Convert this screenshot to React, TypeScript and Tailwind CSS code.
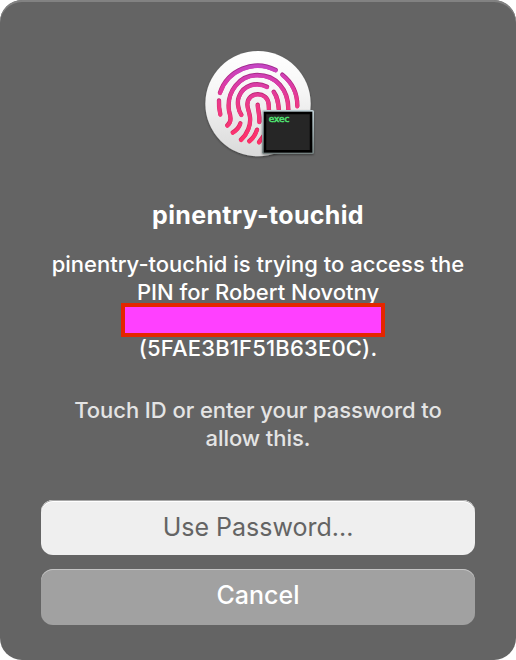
import React from "react";

const ridges = [
  "M72 152A119 119 0 0 1 239 84",
  "M259 98A119 119 0 0 1 304 192",
  "M69 175C68 190 70 204 73 217",
  "M94 250C109 239 103 220 99 206C91 148 131 99 184 99C240 99 278 142 277 204",
  "M136 218C125 202 123 177 129 163C143 128 182 118 213 134",
  "M233 149C245 165 247 182 249 207",
  "M135 293C154 276 165 248 162 225C160 207 155 203 154 187C155 147 215 145 218 187L219 208",
  "M185 188C186 207 192 221 190 239",
  "M110 271C122 265 129 256 133 244",
  "M160 297C172 288 179 276 183 263",
  "M189 300L204 280",
];

function TouchIdIcon() {
  return (
    <svg className="block h-[124px] w-[124px]" viewBox="0 0 372 372" fill="none" role="img" aria-label="Touch ID">
      <defs>
        <linearGradient id="disc" x1="0" y1="27" x2="0" y2="344" gradientUnits="userSpaceOnUse">
          <stop offset="0" stopColor="#ffffff" />
          <stop offset="0.35" stopColor="#f7f7f7" />
          <stop offset="1" stopColor="#d9d9d9" />
        </linearGradient>
        <linearGradient id="ridgeEdge" x1="0" y1="65" x2="0" y2="300" gradientUnits="userSpaceOnUse">
          <stop offset="0" stopColor="#a02a92" />
          <stop offset="0.5" stopColor="#c62568" />
          <stop offset="1" stopColor="#dc2858" />
        </linearGradient>
        <linearGradient id="ridge" x1="0" y1="65" x2="0" y2="300" gradientUnits="userSpaceOnUse">
          <stop offset="0" stopColor="#c446c6" />
          <stop offset="0.25" stopColor="#da3ca8" />
          <stop offset="0.55" stopColor="#ef3a84" />
          <stop offset="1" stopColor="#ff3068" />
        </linearGradient>
        <linearGradient id="frame" x1="0" y1="204" x2="0" y2="337" gradientUnits="userSpaceOnUse">
          <stop offset="0" stopColor="#c0d0d6" />
          <stop offset="1" stopColor="#74807f" />
        </linearGradient>
        <filter id="shadow" x="-10%" y="-10%" width="120%" height="125%">
          <feDropShadow dx="0" dy="3" stdDeviation="3" floodColor="#000" floodOpacity="0.4" />
        </filter>
      </defs>
      <circle cx="186" cy="185" r="158" fill="url(#disc)" filter="url(#shadow)" />
      <g stroke="url(#ridgeEdge)" strokeWidth="13" strokeLinecap="round">
        {ridges.map((d) => <path key={d} d={d} />)}
      </g>
      <g stroke="url(#ridge)" strokeWidth="11" strokeLinecap="round" transform="translate(0 2)">
        {ridges.map((d) => <path key={d} d={d} />)}
      </g>
      <g filter="url(#shadow)">
        <rect x="198" y="204" width="156" height="132" rx="5" fill="url(#frame)" />
        <rect x="203" y="209" width="146" height="123" fill="#050606" />
        <rect x="211" y="217" width="130" height="107" fill="#272727" />
      </g>
      <text x="218" y="240" fill="#4fe070" stroke="#4fe070" strokeWidth="1.8" fontSize="27" fontFamily="'DejaVu Sans', sans-serif" textLength="62" lengthAdjust="spacingAndGlyphs">exec</text>
    </svg>
  );
}

export default function App() {
  return (
    <div className="h-[660px] w-[516px] bg-white font-['Inter',sans-serif]">
      <main className="flex h-full w-full flex-col items-center overflow-hidden rounded-[22px] bg-[#646464] pt-[42px] text-white shadow-[inset_0_2px_0_#828282]">
        <TouchIdIcon />
        <h1 className="mt-[33px] text-[25px] leading-8 font-bold tracking-[0.32px] whitespace-nowrap">pinentry-touchid</h1>
        <div className="mt-[19px] flex flex-col items-center text-[22px] leading-7 font-medium whitespace-nowrap">
          <p>pinentry-touchid is trying to access the</p>
          <p>PIN for Robert Novotny</p>
          <div className="z-10 -my-[3px] mr-[10px] h-[34px] w-[264px] border-4 border-[#e42600] bg-[#ff40ff]" />
          <p className="tracking-[0.18px]">(5FAE3B1F51B63E0C).</p>
        </div>
        <p className="mt-[34px] text-center text-[22px] leading-7 font-medium tracking-[-0.06px] whitespace-nowrap text-[#e4e4e4]">
          Touch ID or enter your password to<br />allow this.
        </p>
        <div className="mt-12 flex w-[434px] flex-col gap-[14px]">
          <button className="h-[55px] rounded-[12px] bg-[#efefef] text-[25px] text-[#646464] shadow-[inset_0_1px_0_#a8a8a8,inset_0_2px_0_#ffffff]">Use Password...</button>
          <button className="h-[56px] rounded-[12px] bg-[#a1a1a1] pb-[2px] text-[25px] font-medium shadow-[inset_0_1px_0_#c4c4c4]">Cancel</button>
        </div>
      </main>
    </div>
  );
}
